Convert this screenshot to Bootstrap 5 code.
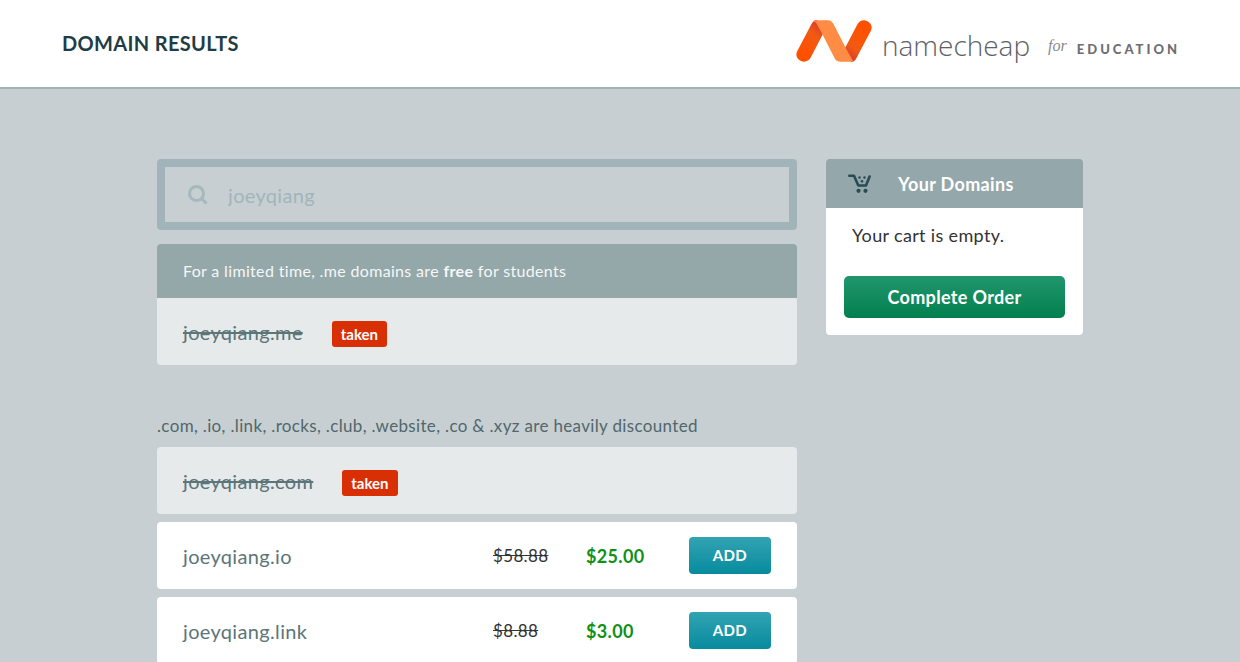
<!DOCTYPE html>
<html lang="en">
<head>
<meta charset="utf-8">
<meta name="viewport" content="width=device-width, initial-scale=1">
<title>Domain Results</title>
<link href="https://cdn.jsdelivr.net/npm/bootstrap@5.3.0/dist/css/bootstrap.min.css" rel="stylesheet">
<style>
  body { background: #c7cfd2; font-family: Lato, "Liberation Sans", sans-serif; font-size: 17px; line-height: 24px; color: #333; letter-spacing: 0.02em; }
  .site-head { border-bottom: 2px solid #a0b4b8; padding: 20px 60px 25px 62px; }
  .page-title { font-size: 20px; line-height: 32px; font-weight: 700; color: #1f3d45; }
  .brand { color: #77787b; gap: 10px; }
  .brand-name { font: 300 28px/34px "Open Sans", sans-serif; letter-spacing: 0; color: #606165; }
  .brand-for { font: italic 16px/20px "Liberation Serif", serif; letter-spacing: 0; color: #8a8b8d; padding-top: 10px; }
  .brand-edu { font-size: 13px; line-height: 20px; font-weight: 900; letter-spacing: 3px; color: #6d6e71; }
  .shell { max-width: 926px; padding-top: 70px; gap: 29px; }
  .side { width: 257px; }
  .search { border: 8px solid #a1b4b9; border-radius: 4px; padding: 0 23px; height: 71px; gap: 20px; margin-bottom: 14px; }
  .search input { font-size: 20px; color: #a1b5b9; letter-spacing: inherit; }
  .search input:focus { outline: 0; }
  .panel { border-radius: 4px; overflow: hidden; }
  .banner { background: #94a7a9; color: #f4f7f7; padding: 15px 26px; font-size: 16px; }
  .result { background: #fff; min-height: 67px; padding: 15px 26px; border-radius: 4px; }
  .result.taken { background: #e6eaeb; }
  .panel .result { border-radius: 0; }
  .domain { font-size: 20px; color: #5c7579; }
  .tag { background: #d92f04; color: #fff; font-size: 15px; line-height: 22px; font-weight: 700; padding: 2px 9px; border-radius: 3px; margin-left: 29px; margin-top: 4px; letter-spacing: 0; }
  .note { color: #51676b; margin: 49px 0 9px; font-size: 17px; }
  .old { width: 93px; font-size: 17px; }
  .new { width: 103px; font-size: 18px; font-weight: 700; color: #109018; }
  .btn-add { width: 82px; height: 37px; padding: 0; border: 0; border-radius: 4px; font-size: 15px; font-weight: 700; color: #fff; letter-spacing: inherit; background: linear-gradient(#32a3b2, #078b9e); }
  .btn-add:hover, .btn-order:hover { color: #fff; filter: brightness(1.05); }
  .cart-head { background: #94a7aa; color: #fff; height: 49px; padding: 0 22px; gap: 27px; font-weight: 700; font-size: 18px; }
  .cart-body { background: #fff; padding: 15px 18px 17px; font-size: 18px; }
  .btn-order { height: 42px; padding: 0; border: 0; border-radius: 5px; font-size: 18px; font-weight: 700; color: #fff; letter-spacing: inherit; background: linear-gradient(#20966c, #03804f); margin-top: 29px; }
</style>
</head>
<body>
<header class="site-head bg-white d-flex justify-content-between align-items-center">
  <h1 class="page-title mb-0 pt-1">DOMAIN RESULTS</h1>
  <a href="#" class="brand d-flex align-items-center text-decoration-none">
    <svg width="76" height="42" viewBox="0 0 76 42" aria-hidden="true">
      <defs>
        <linearGradient id="gl" x1="0.7" y1="0" x2="0.25" y2="0.8"><stop offset="0" stop-color="#d93a30"/><stop offset=".35" stop-color="#f15a12"/><stop offset="1" stop-color="#ff5000"/></linearGradient>
        <linearGradient id="gr" x1="0.3" y1="1" x2="0.75" y2="0.2"><stop offset="0" stop-color="#d93a30"/><stop offset=".35" stop-color="#f15a12"/><stop offset="1" stop-color="#ff5000"/></linearGradient>
      </defs>
      <path d="M1.2 31.2 15.6 3.8Q17.5 0 21 0L28 12 14.7 37.5C12.7 41 9 42.7 5 41 .8 39 -.8 35 1.2 31.2Z" fill="url(#gl)"/>
      <path d="M74.8 10.8 60.4 38.2Q58.5 42 55 42L48 30 61.3 4.5C63.3 1 67 -.7 71 1 75.2 3 76.8 7 74.8 10.8Z" fill="url(#gr)"/>
      <path d="M19 .2H31.500C34.500 .2 36 1.500 37.500 4L50.500 29.500 57.500 41.800H44.500C41.500 41.800 39.800 40.500 38.500 38L25.500 12.500 20.500 3.500Q19.500 1.500 17 1.200Z" fill="#ff8c44"/>
    </svg>
    <span class="brand-name pt-2">namecheap</span>
    <span class="brand-for ms-2">for</span>
    <span class="brand-edu pt-3">EDUCATION</span>
  </a>
</header>

<div class="shell mx-auto d-flex align-items-start">
  <main class="flex-fill">
    <form class="search d-flex align-items-center">
      <label for="q" class="d-flex"><svg width="20" height="20" viewBox="0 0 20 20" fill="none" stroke="#a4b9be" stroke-width="3" role="img" aria-label="Search"><circle cx="8.5" cy="8.5" r="7"/><path d="m13.5 13.5 5 5"/></svg></label>
      <input id="q" type="text" value="joeyqiang" class="border-0 bg-transparent p-0 flex-fill">
    </form>

    <section class="panel">
      <div class="banner">For a limited time, .me domains are <b>free</b> for students</div>
      <div class="result taken d-flex align-items-center"><s class="domain">joeyqiang.me</s><span class="tag">taken</span></div>
    </section>

    <p class="note">.com, .io, .link, .rocks, .club, .website, .co &amp; .xyz are heavily discounted</p>
    <div class="d-grid gap-2">
      <div class="result taken d-flex align-items-center"><s class="domain">joeyqiang.com</s><span class="tag">taken</span></div>
      <div class="result d-flex align-items-center"><span class="domain me-auto">joeyqiang.io</span><s class="old">$58.88</s><span class="new">$25.00</span><button type="button" class="btn btn-add">ADD</button></div>
      <div class="result d-flex align-items-center"><span class="domain me-auto">joeyqiang.link</span><s class="old">$8.88</s><span class="new">$3.00</span><button type="button" class="btn btn-add">ADD</button></div>
    </div>
  </main>

  <aside class="side panel flex-shrink-0">
    <div class="cart-head d-flex align-items-center">
      <svg width="23" height="19" viewBox="0 0 23 19" fill="none" stroke="#2b4a53" stroke-width="2.6" stroke-linecap="round" stroke-linejoin="round" aria-hidden="true"><path d="M1.300 1.800H6L10.300 11.500H18L21.600 2.500"/><g fill="#2b4a53" stroke="none"><circle cx="10.500" cy="16.800" r="2.100"/><circle cx="17.500" cy="16.800" r="2.100"/><circle cx="11.500" cy="3.500" r="1.200"/><circle cx="16.500" cy="3.500" r="1.200"/><circle cx="14" cy="7.200" r="1.300"/></g></svg>
      <span>Your Domains</span>
    </div>
    <div class="cart-body">
      <div class="ps-2">Your cart is empty.</div>
      <button type="button" class="btn btn-order w-100">Complete Order</button>
    </div>
  </aside>
</div>
<script src="https://cdn.jsdelivr.net/npm/bootstrap@5.3.0/dist/js/bootstrap.bundle.min.js"></script>
</body>
</html>
